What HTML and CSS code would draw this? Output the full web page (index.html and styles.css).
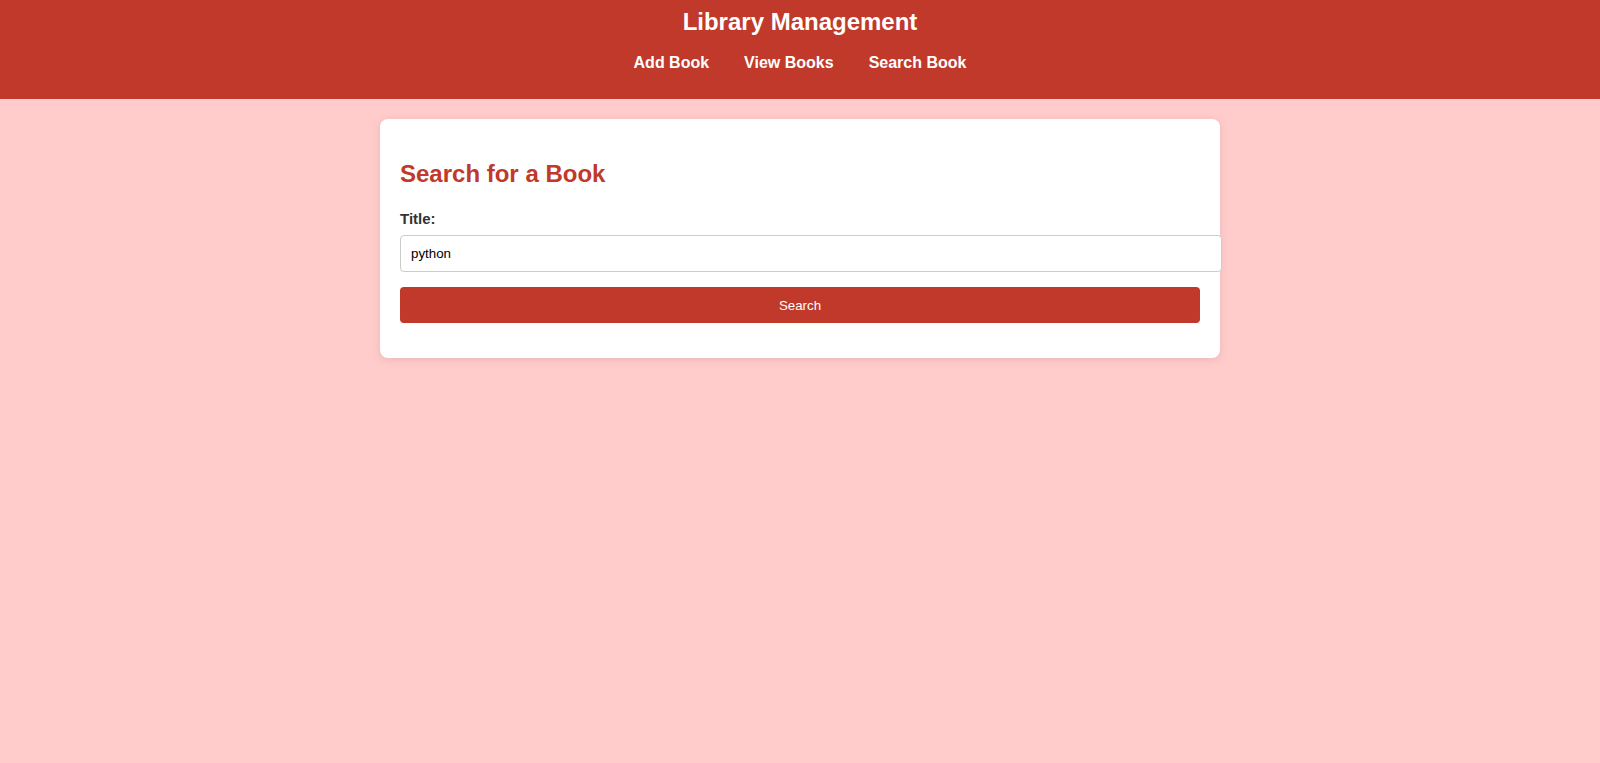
FILE: index.html
```html
<!DOCTYPE html>
<html lang="en">
<head>
<meta charset="utf-8">
<title>Library Management</title>
<link rel="stylesheet" href="styles.css">
</head>
<body>
<header class="site-header">
  <h1 class="site-title">Library Management</h1>
  <nav class="site-nav">
    <a href="#" class="nav-link">Add Book</a>
    <a href="#" class="nav-link">View Books</a>
    <a href="#" class="nav-link">Search Book</a>
  </nav>
</header>
<main class="card">
  <h2 class="card-title">Search for a Book</h2>
  <form class="search-form">
    <label class="field-label" for="title">Title:</label>
    <input class="field-input" id="title" type="text" value="python">
    <button class="btn" type="button">Search</button>
  </form>
</main>
</body>
</html>
```
FILE: styles.css
```css
html, body {
  margin: 0;
  padding: 0;
}
body {
  background: #ffcccb;
  font-family: "Liberation Sans", Arial, sans-serif;
  color: #333;
  min-height: 100vh;
}
.site-header {
  background: #c0392b;
  color: #fff;
  height: 99px;
  box-sizing: border-box;
  padding-top: 8px;
  text-align: center;
}
.site-title {
  margin: 0;
  font-size: 24px;
  font-weight: bold;
  line-height: 27.6px;
}
.site-nav {
  margin-top: 18px;
  display: flex;
  justify-content: center;
  gap: 35px;
  line-height: 18.4px;
}
.nav-link {
  color: #fff;
  text-decoration: none;
  font-weight: bold;
  font-size: 16px;
}
.card {
  display: block;
  max-width: 800px;
  margin: 20px auto 0;
  padding: 20px;
  background: #fff;
  border-radius: 8px;
  box-shadow: 0 2px 10px rgba(0, 0, 0, 0.1);
}
.card-title {
  margin: 21px 0 22px;
  color: #c0392b;
  font-size: 24px;
  line-height: 27.6px;
}
.search-form {
  margin: 0;
}
.field-label {
  display: block;
  font-weight: bold;
  font-size: 15px;
  line-height: 17px;
  color: #333;
  margin-bottom: 8px;
}
.field-input {
  display: block;
  width: 100%;
  box-sizing: content-box;
  padding: 10px;
  border: 1px solid #ccc;
  border-radius: 4px;
  font-family: "Liberation Sans", Arial, sans-serif;
  font-size: 13.33px;
  line-height: 15.4px;
  color: #000;
  margin: 0 0 15px;
}
.btn {
  display: block;
  width: 100%;
  box-sizing: border-box;
  padding: 11px 10px 9px;
  border: none;
  border-radius: 4px;
  background: #c0392b;
  color: #fff;
  font-family: "Liberation Sans", Arial, sans-serif;
  font-size: 13.33px;
  line-height: 16px;
  margin-bottom: 15px;
  cursor: pointer;
}
```
